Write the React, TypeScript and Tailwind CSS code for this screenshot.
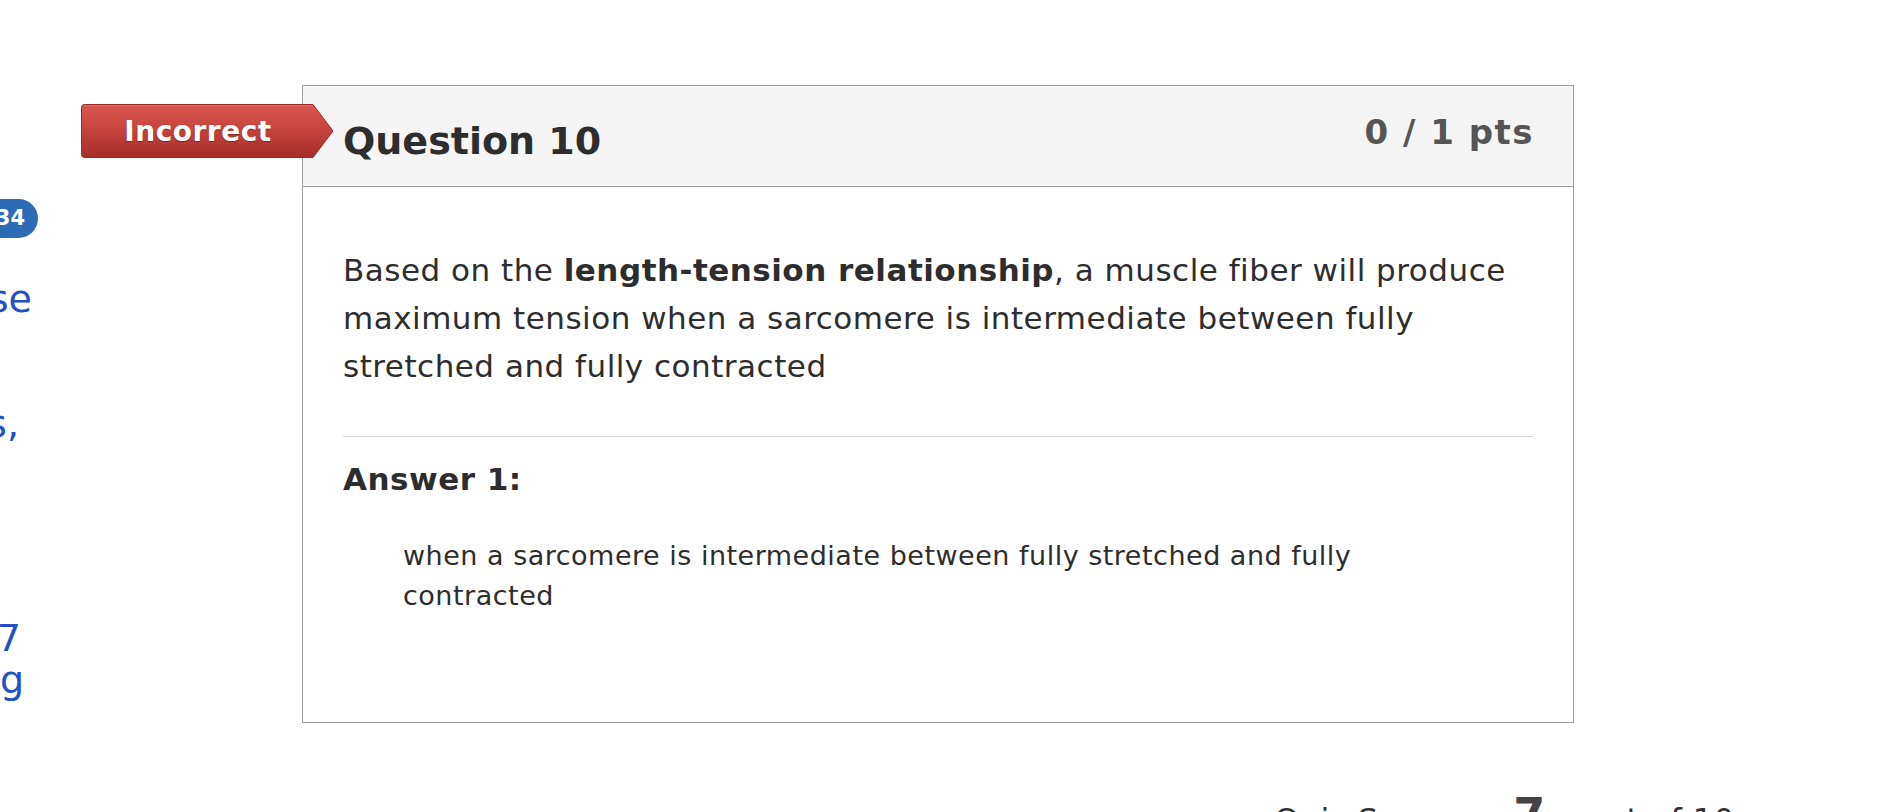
import React from "react";

function Badge() {
  return (
    <div className="absolute left-[-222px] top-[18px] h-[54px] w-[253px] z-10">
      <svg width="253" height="54" viewBox="0 0 253 54" className="absolute inset-0">
        <defs>
          <linearGradient id="bg" x1="0" y1="0" x2="0" y2="1">
            <stop offset="0" stopColor="#d9574e" />
            <stop offset="0.5" stopColor="#c4433b" />
            <stop offset="1" stopColor="#a52e27" />
          </linearGradient>
        </defs>
        <path
          d="M3.5 0.5 H232 L252 27 L232 53.5 H3.5 Q0.5 53.5 0.5 50.5 V3.5 Q0.5 0.5 3.5 0.5 Z"
          fill="url(#bg)"
          stroke="#9a2b25"
          strokeWidth="1"
        />
        <path d="M3.5 1.5 H231.5" stroke="#e0716a" strokeWidth="1" />
      </svg>
      <div className="absolute left-0 top-0 flex h-[54px] w-[234px] items-center justify-center pt-[1px]">
        <span className="text-[28px] font-bold leading-none tracking-[0.5px] text-white [text-shadow:0_1px_1px_rgba(0,0,0,0.35)]">
          Incorrect
        </span>
      </div>
    </div>
  );
}

function Sidebar() {
  return (
    <aside className="flex w-[38px] shrink-0 flex-col overflow-hidden text-[38px] leading-[42px] text-[#2350c4]">
      <div className="mt-[199px] flex justify-end">
        <span className="flex h-[39px] shrink-0 items-center rounded-r-full bg-[#2d6cb4] pl-[20px] pr-[13px] text-[21px] font-bold leading-none text-white">
          34
        </span>
      </div>
      <div className="mt-[40px] flex justify-end whitespace-nowrap pr-[6px]">
        <span className="shrink-0">Close</span>
      </div>
      <div className="mt-[83px] flex justify-end whitespace-nowrap pr-[19px]">
        <span className="shrink-0">items,</span>
      </div>
      <div className="mt-[172px] flex justify-end whitespace-nowrap pr-[17px]">
        <span className="shrink-0">2017</span>
      </div>
      <div className="flex justify-end whitespace-nowrap pr-[14px]">
        <span className="shrink-0">Using</span>
      </div>
    </aside>
  );
}

export default function App() {
  return (
    <div className="flex h-[812px] w-[1902px] overflow-hidden bg-white font-['DejaVu_Sans','Verdana',sans-serif] text-[#2d2d2d]">
      <Sidebar />
      <main className="flex flex-col pl-[264px] pt-[85px]">
        <div className="relative w-[1272px] border border-[#a0a0a0] bg-white">
          <Badge />
          <div className="flex h-[101px] items-start justify-between border-b border-[#a0a0a0] bg-[#f5f5f5] pl-[40px] pr-[39px]">
            <h2 className="mt-[33px] text-[38px] font-bold leading-[45px] text-[#2d2d2d]">Question 10</h2>
            <div className="mt-[26px] text-[34px] font-bold leading-[40px] tracking-[1.5px] text-[#555555]">0 / 1 pts</div>
          </div>
          <div className="px-[40px] pb-[106px] pt-[59px]">
            <p className="text-[31px] leading-[48px] tracking-[0.5px]">
              Based on the <strong className="font-bold">length-tension relationship</strong>, a muscle fiber will produce
              maximum tension when a sarcomere is intermediate between fully stretched and fully contracted
            </p>
            <div className="mt-[46px] h-px bg-[#d9d9d9]" />
            <div className="mt-[18px] text-[31px] font-bold leading-[48px] tracking-[0.5px]">Answer 1:</div>
            <div className="ml-[60px] mt-[33px] max-w-[1000px] text-[27px] leading-[40px] tracking-[0.5px]">
              when a sarcomere is intermediate between fully stretched and fully contracted
            </div>
          </div>
        </div>
        <div className="ml-[972px] mt-[66px] flex items-baseline whitespace-nowrap text-[32px] tracking-[0.5px] text-[#333333]">
          <span>Quiz Score:</span>
          <span className="ml-[52px] mr-[40px] text-[46px] font-bold leading-[52px] text-[#444444]">7</span>
          <span>out of 10</span>
        </div>
      </main>
    </div>
  );
}
